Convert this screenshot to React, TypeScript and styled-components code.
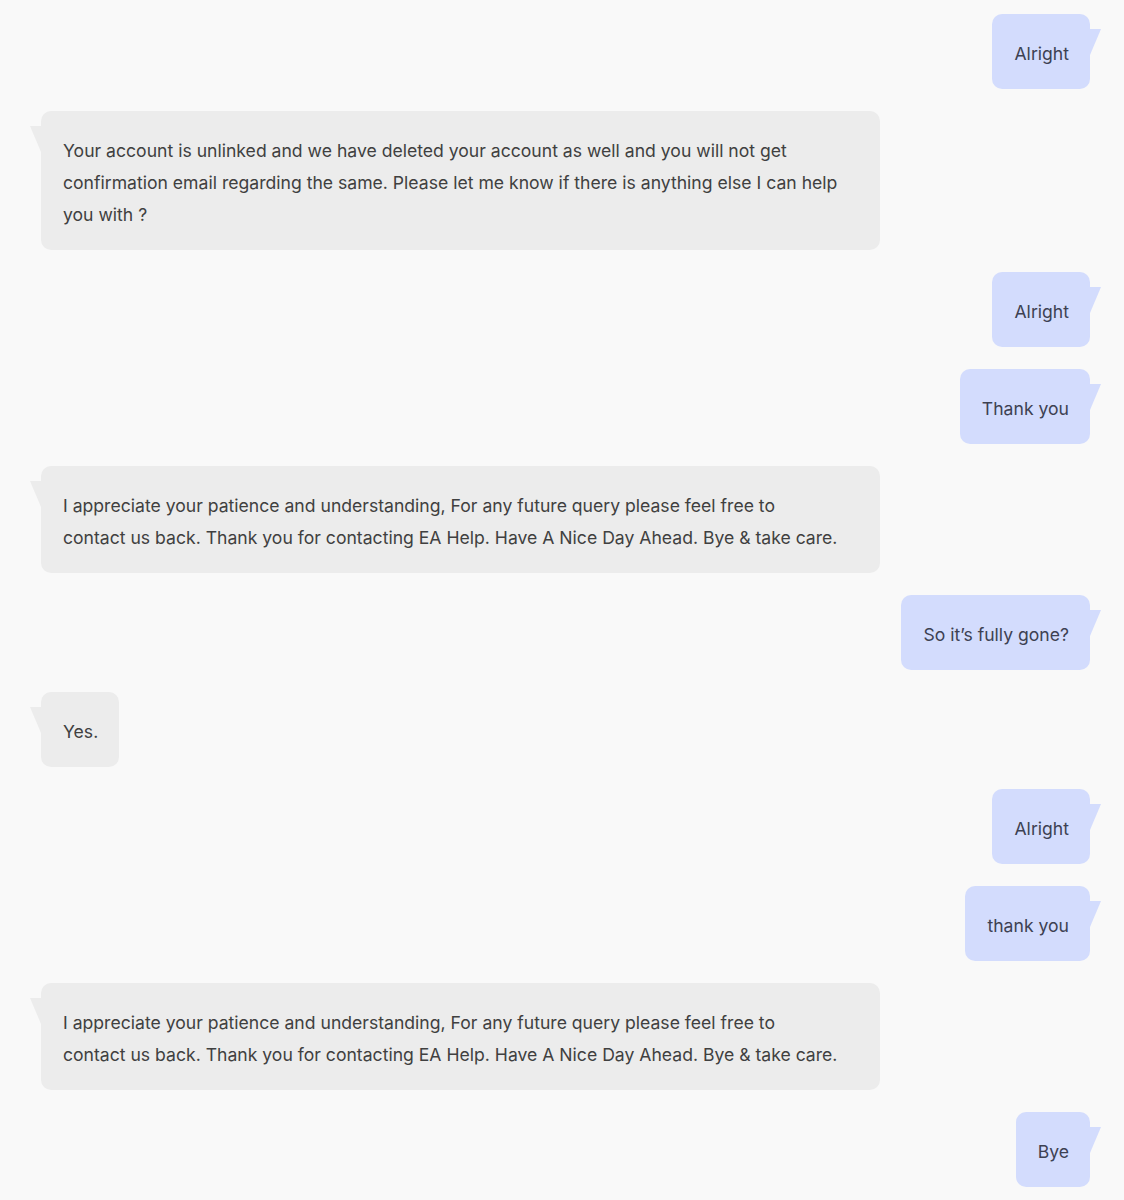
import styled, { createGlobalStyle } from 'styled-components'

const GlobalStyle = createGlobalStyle`
  html, body {
    margin: 0;
    padding: 0;
    background: #f9f9f9;
  }
  body {
    font-family: Inter, "Noto Sans", "Liberation Sans", sans-serif;
  }
`

const Thread = styled.div`
  display: flex;
  flex-direction: column;
  gap: 22px;
  padding: 14px 34px 20px 41px;
`

interface RowProps {
  mine: boolean;
}

const Row = styled.div<RowProps>`
  display: flex;
  justify-content: ${(props) => props.mine ? 'flex-end' : 'flex-start'};
`

const Bubble = styled.div<RowProps>`
  position: relative;
  max-width: 80%;
  box-sizing: border-box;
  padding: 23.5px 21px 19.5px 22px;
  border-radius: 10px;
  font-size: 17.6px;
  line-height: 32px;
  background: ${(props) => props.mine ? '#d3dcfd' : '#ececec'};
  color: ${(props) => props.mine ? '#3d4152' : '#404040'};

  &::after{
    content: '';
    position: absolute;
    top: 15px;
    width: 11px;
    height: 26px;
    background: inherit;
    ${(props) => props.mine
      ? 'right: -11px; clip-path: polygon(0 0, 100% 0, 0 100%);'
      : 'left: -11px; clip-path: polygon(0 0, 100% 0, 100% 100%);'}
  }
`

const AgentBubble = styled(Bubble)`
  width: 839px;
  max-width: none;
  padding-right: 40px;
`

const messages = [
  { mine: true, text: 'Alright' },
  { mine: false, text: 'Your account is unlinked and we have deleted your account as well and you will not get confirmation email regarding the same. Please let me know if there is anything else I can help you with ?' },
  { mine: true, text: 'Alright' },
  { mine: true, text: 'Thank you' },
  { mine: false, text: 'I appreciate your patience and understanding, For any future query please feel free to contact us back. Thank you for contacting EA Help. Have A Nice Day Ahead. Bye & take care.' },
  { mine: true, text: 'So it\u2019s fully gone?' },
  { mine: false, text: 'Yes.' },
  { mine: true, text: 'Alright' },
  { mine: true, text: 'thank you' },
  { mine: false, text: 'I appreciate your patience and understanding, For any future query please feel free to contact us back. Thank you for contacting EA Help. Have A Nice Day Ahead. Bye & take care.' },
  { mine: true, text: 'Bye' },
]

export default function App() {
  return (
    <>
      <GlobalStyle />
      <Thread>
        {messages.map((m, i) => (
          <Row key={i} mine={m.mine}>
            {!m.mine && m.text.length > 40
              ? <AgentBubble mine={false}>{m.text}</AgentBubble>
              : <Bubble mine={m.mine}>{m.text}</Bubble>}
          </Row>
        ))}
      </Thread>
    </>
  )
}
